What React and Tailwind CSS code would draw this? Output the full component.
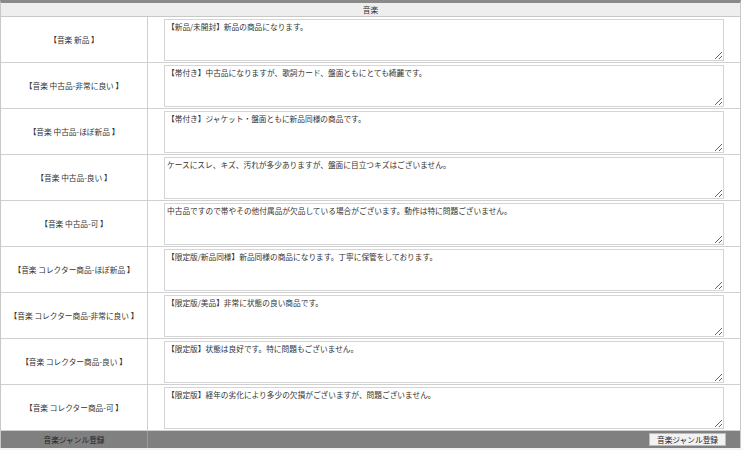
import { useState } from 'react';

// 音楽コンディション説明
const rows = [
  { label: '【音楽 新品 】', text: '【新品/未開封】新品の商品になります。' },
  { label: '【音楽 中古品-非常に良い 】', text: '【帯付き】中古品になりますが、歌詞カード、盤面ともにとても綺麗です。' },
  { label: '【音楽 中古品-ほぼ新品 】', text: '【帯付き】ジャケット・盤面ともに新品同様の商品です。' },
  { label: '【音楽 中古品-良い 】', text: 'ケースにスレ、キズ、汚れが多少ありますが、盤面に目立つキズはございません。' },
  { label: '【音楽 中古品-可 】', text: '中古品ですので帯やその他付属品が欠品している場合がございます。動作は特に問題ございません。' },
  { label: '【音楽 コレクター商品-ほぼ新品 】', text: '【限定版/新品同様】新品同様の商品になります。丁寧に保管をしております。' },
  { label: '【音楽 コレクター商品-非常に良い 】', text: '【限定版/美品】非常に状態の良い商品です。' },
  { label: '【音楽 コレクター商品-良い 】', text: '【限定版】状態は良好です。特に問題もございません。' },
  { label: '【音楽 コレクター商品-可 】', text: '【限定版】経年の劣化により多少の欠損がございますが、問題ございません。' },
];

const App = () => {
  const [values, setValues] = useState(rows.map((r) => r.text));

  return (
    <div className="w-[743px] h-[450px] bg-white text-[#333] text-[7.7px] font-['Noto_Sans_CJK_JP','Noto_Sans',sans-serif] overflow-hidden">
      <div className="w-[741px] border-t-[3px] border-[#8a8a8a] border-l border-r border-l-[#c8c8c8] border-r-[#c8c8c8]">
        {/* ヘッダー */}
        <div className="h-[14px] bg-[#eeeeee] border-b border-[#c8c8c8] flex items-center justify-center">
          音楽
        </div>

        {rows.map((row, i) => (
          <div key={i} className="grid grid-cols-[147px_1fr] h-[46px] border-b border-[#d0d0d0]">
            <div className="flex items-center justify-center border-r border-[#d0d0d0]">{row.label}</div>
            <div className="flex items-center justify-center">
              <textarea
                className="w-[560px] h-[42px] border border-[#d4d4d4] px-[2px] py-[1px] leading-[11px] text-[#333] outline-none"
                value={values[i]}
                onChange={(e) => {
                  const next = [...values];
                  next[i] = e.target.value;
                  setValues(next);
                }}
              />
            </div>
          </div>
        ))}

        {/* 登録 */}
        <div className="grid grid-cols-[147px_1fr] h-[17px] bg-[#808080]">
          <div className="flex items-center justify-center border-r border-[#9a9a9a] text-[#222]">音楽ジャンル登録</div>
          <div className="flex items-center justify-end pr-[14px]">
            <button className="w-[77px] h-[13px] bg-[#f2f2f2] border border-[#bbbbbb] text-[#222] leading-none">
              音楽ジャンル登録
            </button>
          </div>
        </div>
      </div>
      <div className="h-[3px] bg-[#f4f4f4]" />
    </div>
  );
};

export default App;
